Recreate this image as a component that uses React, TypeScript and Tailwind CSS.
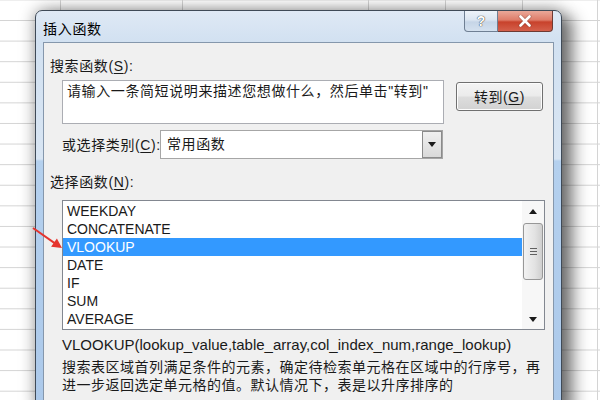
import React from 'react';

const FUNCTIONS = ['WEEKDAY', 'CONCATENATE', 'VLOOKUP', 'DATE', 'IF', 'SUM', 'AVERAGE'];

const Triangle = ({ down }: { down?: boolean }) => (
  <svg width="8" height="5" viewBox="0 0 8 5">
    <polygon points={down ? '0,0 8,0 4,5' : '0,5 8,5 4,0'} fill="#1a1a1a" />
  </svg>
);

export default function App() {
  return (
    <div className="relative w-[600px] h-[400px] overflow-hidden bg-white font-['Liberation_Sans','Noto_Sans_CJK_SC',sans-serif] text-[14px] text-[#1a1a1a]">
      {/* spreadsheet behind the dialog */}
      <div className="flex h-full bg-[linear-gradient(to_bottom,#d4d4d4_1px,transparent_1px)] bg-[length:100%_20.6px] bg-[position:0_20px]">
        <div className="w-[61px] h-full shrink-0 border-r border-[#d4d4d4]" />
        <div className="w-[122px] h-full shrink-0 border-r border-[#d4d4d4]" />
        <div className="w-[186px] h-full shrink-0 border-r border-[#d4d4d4]" />
        <div className="w-[77px] h-full shrink-0 border-r border-[#d4d4d4]" />
        <div className="w-[77px] h-full shrink-0 border-r border-[#d4d4d4]" />
        <div className="w-[75px] h-full shrink-0 border-r border-[#d4d4d4]" />
      </div>

      {/* Dialog window */}
      <div className="absolute left-[35px] top-[10px] w-[527px] h-[400px] flex flex-col rounded-t-[7px] border border-[#3f4a57] bg-[linear-gradient(to_bottom,#dfe9f5_0px,#d2e1f1_30px,#d8e5f3_148px,#b4d0ee_150px,#acc9ea_100%)] shadow-[0_0_16px_rgba(0,0,0,0.4),12px_6px_16px_rgba(0,0,0,0.45)]">
        {/* Title bar */}
        <div className="flex h-[31px] items-start justify-between shrink-0">
          <div className="pl-[7px] pt-[8px] leading-[20px] tracking-[0.7px] text-black">插入函数</div>
          <div className="flex mr-[8px] h-[21px]">
            <div className="w-[34px] h-full flex items-center justify-center border border-t-0 border-[#6f7f93] rounded-bl-[4px] bg-[linear-gradient(to_bottom,#eef3f9_0%,#dbe5f1_45%,#c6d5e7_55%,#d4e1ef_100%)]">
              <span className="text-[14px] font-bold leading-none text-white [text-shadow:0_0_1px_#333,0_0_1px_#333]">?</span>
            </div>
            <div className="w-[55px] h-full flex items-center justify-center border border-t-0 border-l-0 border-[#6e3a33] rounded-br-[4px] bg-[linear-gradient(to_bottom,#eaa899_0%,#de7c69_45%,#c8422c_55%,#d4604b_100%)]">
              <svg width="14" height="12" viewBox="0 0 14 12">
                <path d="M2.5 1.5 L11.5 10.5 M11.5 1.5 L2.5 10.5" stroke="#5a2a24" strokeWidth="4" strokeLinecap="round" opacity="0.35" />
                <path d="M2.5 1.5 L11.5 10.5 M11.5 1.5 L2.5 10.5" stroke="#ffffff" strokeWidth="2.6" strokeLinecap="round" />
              </svg>
            </div>
          </div>
        </div>

        {/* Client area */}
        <div className="mx-[7px] flex-1 flex flex-col border border-[#8597ac] bg-[#f0f0f0]">
          <div className="mt-[13px] ml-[6px] leading-[20px] tracking-[0.6px]">
            搜索函数(<span className="underline underline-offset-2">S</span>):
          </div>

          <div className="mt-[4px] ml-[18px] flex items-start">
            <div className="w-[382px] h-[44px] border border-[#abadb3] bg-white px-[4px] leading-[20px] tracking-[0.6px] whitespace-nowrap">
              请输入一条简短说明来描述您想做什么，然后单击"转到"
            </div>
            <button className="ml-[12px] mt-[2px] w-[87px] h-[29px] rounded-[3px] border border-[#707070] bg-[linear-gradient(to_bottom,#f4f4f4_0%,#ebebeb_48%,#dddddd_52%,#d2d2d2_100%)] leading-[20px] tracking-[0.6px] text-[#1a1a1a] shadow-[inset_0_0_0_1px_#fcfcfc]">
              转到(<span className="underline underline-offset-2">G</span>)
            </button>
          </div>

          <div className="mt-[6px] ml-[18px] flex items-center">
            <div className="w-[98px] leading-[20px] tracking-[0.6px] whitespace-nowrap">
              或选择类别(<span className="underline underline-offset-2">C</span>):
            </div>
            <div className="w-[283px] h-[29px] flex border border-[#a6a6a6] bg-white">
              <div className="flex-1 pl-[6px] leading-[27px] tracking-[0.6px]">常用函数</div>
              <div className="w-[20px] h-full flex items-center justify-center border border-[#8b8b8b] bg-[linear-gradient(to_bottom,#f0f0f0,#d9d9d9)]">
                <Triangle down />
              </div>
            </div>
          </div>

          <div className="mt-[13px] ml-[6px] leading-[20px] tracking-[0.6px]">
            选择函数(<span className="underline underline-offset-2">N</span>):
          </div>

          {/* Function list */}
          <div className="mt-[8px] ml-[18px] w-[483px] h-[130px] flex border border-[#828790] bg-white">
            <div className="flex-1 pt-[1px]">
              {FUNCTIONS.map(name => (
                <div
                  key={name}
                  className={`h-[18px] pl-[4px] leading-[18px] ${name === 'VLOOKUP' ? 'bg-[#3399ff] text-white' : 'text-[#1a1a1a]'}`}
                >
                  {name}
                </div>
              ))}
            </div>
            <div className="w-[22px] flex flex-col bg-[#f7f7f7] px-[1px]">
              <div className="h-[20px] flex items-center justify-center">
                <Triangle />
              </div>
              <div className="flex-1 pt-[2px]">
                <div className="h-[57px] rounded-[3px] border border-[#979797] bg-[linear-gradient(to_right,#f2f2f2,#e2e2e2_60%,#cfcfcf)] flex items-center justify-center">
                  <div className="flex flex-col gap-[2px]">
                    <div className="w-[7px] h-[1px] bg-[#606060]" />
                    <div className="w-[7px] h-[1px] bg-[#606060]" />
                    <div className="w-[7px] h-[1px] bg-[#606060]" />
                  </div>
                </div>
              </div>
              <div className="h-[20px] flex items-center justify-center">
                <Triangle down />
              </div>
            </div>
          </div>

          <div className="mt-[5px] ml-[18px] text-[15px] leading-[20px] whitespace-nowrap">
            VLOOKUP(lookup_value,table_array,col_index_num,range_lookup)
          </div>
          <div className="mt-[3px] ml-[18px] leading-[18px] tracking-[0.5px] whitespace-nowrap">
            搜索表区域首列满足条件的元素，确定待检索单元格在区域中的行序号，再
            <br />
            进一步返回选定单元格的值。默认情况下，表是以升序排序的
          </div>
        </div>
      </div>

      {/* red annotation arrow */}
      <svg className="absolute left-[28px] top-[222px]" width="40" height="32" viewBox="0 0 40 32">
        <line x1="5" y1="6" x2="27" y2="21.4" stroke="#e5342e" strokeWidth="2" />
        <polygon points="34,26 23.1,24.8 28.9,16.6" fill="#e5342e" />
      </svg>
    </div>
  );
}
